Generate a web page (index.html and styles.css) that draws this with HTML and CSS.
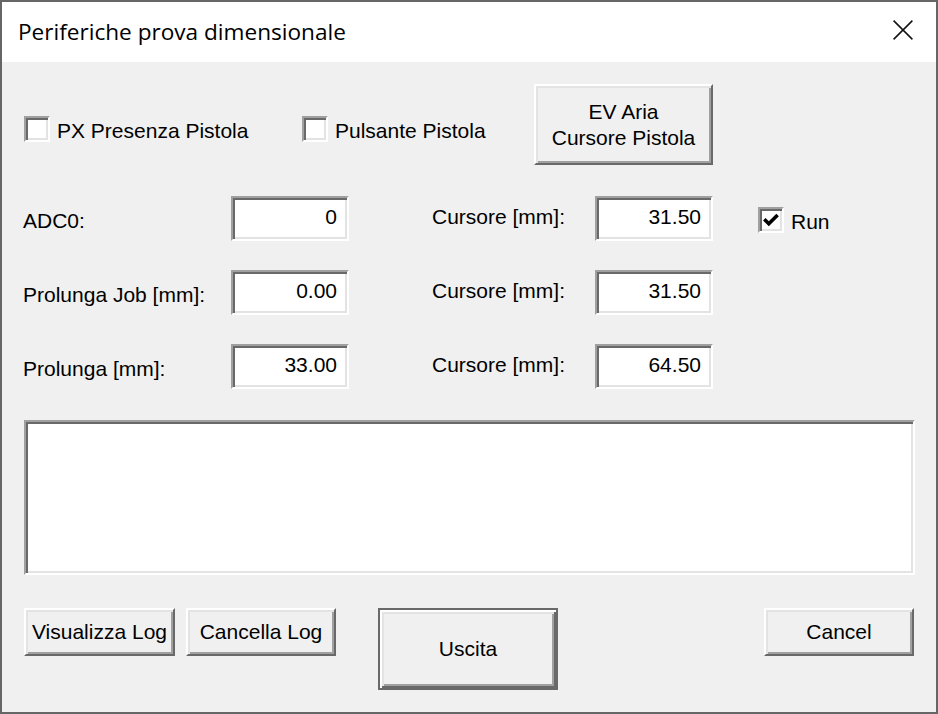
FILE: index.html
```html
<!DOCTYPE html>
<html lang="it">
<head>
<meta charset="utf-8">
<title>Periferiche prova dimensionale</title>
<link rel="stylesheet" href="styles.css">
</head>
<body>
<div class="window">
  <div class="titlebar">
    <span class="title">Periferiche prova dimensionale</span>
    <svg class="close" width="20" height="20" viewBox="0 0 20 20"><path d="M0.6 0.6L19.4 19.4M19.4 0.6L0.6 19.4" stroke="#111" stroke-width="1.5" fill="none"/></svg>
  </div>
  <div class="client">
    <div class="toprow">
      <div class="check chk1"><span class="box"></span><span class="ctext">PX Presenza Pistola</span></div>
      <div class="check chk2"><span class="box"></span><span class="ctext">Pulsante Pistola</span></div>
      <div class="btn btn-ev">EV Aria<br>Cursore Pistola</div>
    </div>

    <div class="form">
      <div class="lbl c1">ADC0:</div>
      <div class="field num c2">0</div>
      <div class="lbl lbl2 c4">Cursore [mm]:</div>
      <div class="field num c5">31.50</div>
      <div class="check run c7"><span class="box"><svg width="22" height="22" viewBox="0 0 22 22"><polyline points="4.3,10.3 8.8,14.8 17.6,6" fill="none" stroke="#000" stroke-width="3.6"/></svg></span><span class="ctext">Run</span></div>

      <div class="lbl c1">Prolunga Job [mm]:</div>
      <div class="field num c2">0.00</div>
      <div class="lbl lbl2 c4">Cursore [mm]:</div>
      <div class="field num c5">31.50</div>

      <div class="lbl c1">Prolunga [mm]:</div>
      <div class="field num c2">33.00</div>
      <div class="lbl lbl2 c4">Cursore [mm]:</div>
      <div class="field num c5">64.50</div>
    </div>

    <div class="field log"></div>

    <div class="buttons">
      <div class="btn btn-vis">Visualizza Log</div>
      <div class="btn btn-canc">Cancella Log</div>
      <div class="btn btn-default btn-exit">Uscita</div>
      <div class="btn btn-cancel">Cancel</div>
    </div>
  </div>
</div>
</body>
</html>
```

FILE: styles.css
```css
* { box-sizing: border-box; }

html, body {
  margin: 0;
  padding: 0;
  background: #f0f0f0;
}

.window {
  width: 938px;
  height: 714px;
  border: 2px solid #666666;
  display: flex;
  flex-direction: column;
  background: #f0f0f0;
  font-family: "Liberation Sans", Arial, sans-serif;
  font-size: 21px;
  line-height: 24px;
  color: #000;
}

.titlebar {
  height: 60px;
  flex: none;
  background: #ffffff;
  display: flex;
  align-items: center;
  padding-left: 16px;
  padding-right: 23px;
}

.title {
  font-family: "Open Sans", "Noto Sans", sans-serif;
  font-size: 22.6px;
  line-height: 30px;
  color: #000;
  flex: 1;
}

.close {
  display: block;
  margin-top: -4px;
}

.client {
  flex: 1;
  padding: 0 22px;
  display: flex;
  flex-direction: column;
}

/* raised button */
.btn {
  border: 2px solid;
  border-color: #ffffff #696969 #696969 #ffffff;
  box-shadow: inset 2px 2px #e3e3e3, inset -2px -2px #a0a0a0;
  background: #f0f0f0;
  display: flex;
  align-items: center;
  justify-content: center;
  text-align: center;
  flex: none;
}

.btn-default {
  border-color: #696969;
  box-shadow: inset 2px 2px #ffffff, inset -2px -2px #696969, inset 4px 4px #e3e3e3, inset -4px -4px #a0a0a0;
}

/* sunken field */
.field {
  border: 2px solid;
  border-color: #a0a0a0 #ffffff #ffffff #a0a0a0;
  box-shadow: inset 2px 2px #696969, inset -2px -2px #e3e3e3;
  background: #ffffff;
}

/* checkbox */
.check {
  display: flex;
  align-items: flex-start;
}

.box {
  width: 26px;
  height: 26px;
  flex: none;
  border: 2px solid;
  border-color: #a0a0a0 #ffffff #ffffff #a0a0a0;
  box-shadow: inset 2px 2px #696969, inset -2px -2px #e3e3e3;
  background: #ffffff;
}

.box svg { display: block; }

.ctext {
  padding-top: 3px;
  margin-left: 7px;
  white-space: nowrap;
}

/* top row */
.toprow {
  margin-top: 22px;
  display: flex;
  align-items: flex-start;
  height: 81px;
}

.chk1, .chk2 { margin-top: 32px; }
.chk1 { width: 278px; }
.chk2 { width: 232px; }

.btn-ev {
  width: 179px;
  height: 81px;
  line-height: 26px;
}

/* form grid */
.form {
  margin-top: 31px;
  margin-left: -1px;
  display: grid;
  grid-template-columns: 208px 118px 83px 163px 118px 44px auto;
  grid-auto-rows: 45px;
  row-gap: 29px;
}

.c1 { grid-column: 1; }
.c2 { grid-column: 2; }
.c4 { grid-column: 4; }
.c5 { grid-column: 5; }
.c7 { grid-column: 7; }

.lbl {
  padding-top: 13px;
  white-space: nowrap;
}

.lbl2 { padding-top: 9px; }

.num {
  text-align: right;
  padding: 7px 10px 0 0;
}

.run {
  margin-top: 11px;
  margin-left: 1px;
}

/* log */
.log {
  margin-top: 31px;
  width: 891px;
  height: 155px;
}

/* bottom buttons */
.buttons {
  margin-top: 33px;
  display: flex;
  align-items: flex-start;
}

.btn-vis { width: 151px; height: 48px; }
.btn-canc { width: 150px; height: 48px; margin-left: 11px; }
.btn-exit { width: 180px; height: 82px; margin-left: 42px; }
.btn-cancel { width: 150px; height: 48px; margin-left: auto; }
```
